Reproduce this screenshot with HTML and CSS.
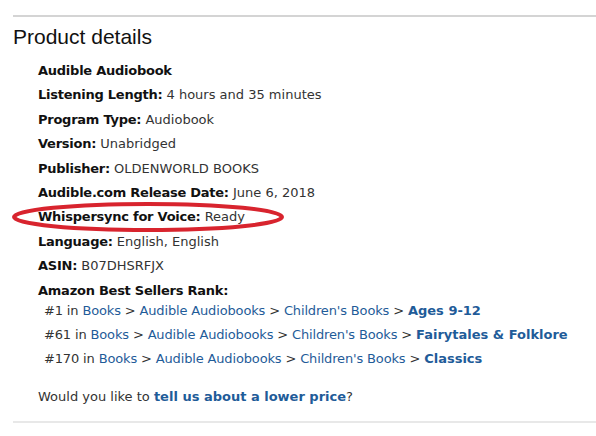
FILE: index.html
```html
<html>
    <head>
        <link rel="stylesheet" href="styles.css">
    </head>
    <body>
        <div class="details">
            <h2 class="title">Product details</h2>
            <ul class="list">
                <li><b>Audible Audiobook</b></li>
                <li><b>Listening Length:</b> 4 hours and 35 minutes</li>
                <li><b>Program Type:</b> Audiobook</li>
                <li><b>Version:</b> Unabridged</li>
                <li><b>Publisher:</b> OLDENWORLD BOOKS</li>
                <li><b>Audible.com Release Date:</b> June 6, 2018</li>
                <li class="marked">
                    <b>Whispersync for Voice:</b> Ready
                    <svg class="circle" width="280" height="32" viewBox="0 0 280 32">
                        <ellipse cx="139" cy="16" rx="134" ry="13" fill="none" stroke="#d8242e" stroke-width="4"/>
                    </svg>
                </li>
                <li><b>Language:</b> English, English</li>
                <li><b>ASIN:</b> B07DHSRFJX</li>
                <li class="rank">
                    <b>Amazon Best Sellers Rank:</b>
                    <ul class="ranks">
                        <li>#1 in <a href="#">Books</a> &gt; <a href="#">Audible Audiobooks</a> &gt; <a href="#">Children's Books</a> &gt; <a href="#" class="strong">Ages 9-12</a></li>
                        <li>#61 in <a href="#">Books</a> &gt; <a href="#">Audible Audiobooks</a> &gt; <a href="#">Children's Books</a> &gt; <a href="#" class="strong">Fairytales &amp; Folklore</a></li>
                        <li>#170 in <a href="#">Books</a> &gt; <a href="#">Audible Audiobooks</a> &gt; <a href="#">Children's Books</a> &gt; <a href="#" class="strong">Classics</a></li>
                    </ul>
                </li>
            </ul>
            <p class="price">Would you like to <a href="#" class="strong">tell us about a lower price</a>?</p>
        </div>
    </body>
</html>
```
FILE: styles.css
```css
body {
    margin: 0;
    background-color: #fff;
    font-family: "DejaVu Sans", Verdana, sans-serif;
    font-size: 13px;
    color: #333;
}
.details {
    margin-top: 15px;
    margin-left: 13px;
    border-top: 2px solid #d4d4d4;
    border-bottom: 2px solid #e8e8e8;
}
.title {
    font-family: "Liberation Sans", Arial, sans-serif;
    font-weight: normal;
    font-size: 21px;
    color: #111;
    margin: 8px 0 10px 0;
}
.list {
    list-style: none;
    margin: 0;
    padding-left: 25px;
}
.list li {
    line-height: 24.4px;
}
.list b {
    color: #111;
    letter-spacing: -0.25px;
}
.marked {
    position: relative;
}
.circle {
    position: absolute;
    left: -29px;
    top: -4px;
}
.ranks {
    list-style: none;
    margin: -4px 0 0 0;
    padding-left: 6px;
}
.ranks li {
    line-height: 24px;
    letter-spacing: -0.15px;
}
a {
    color: #1f5c99;
    text-decoration: none;
}
.strong {
    font-weight: bold;
    letter-spacing: 0;
}
.price {
    margin: 14px 0 12px 25px;
    line-height: 24px;
}
```
